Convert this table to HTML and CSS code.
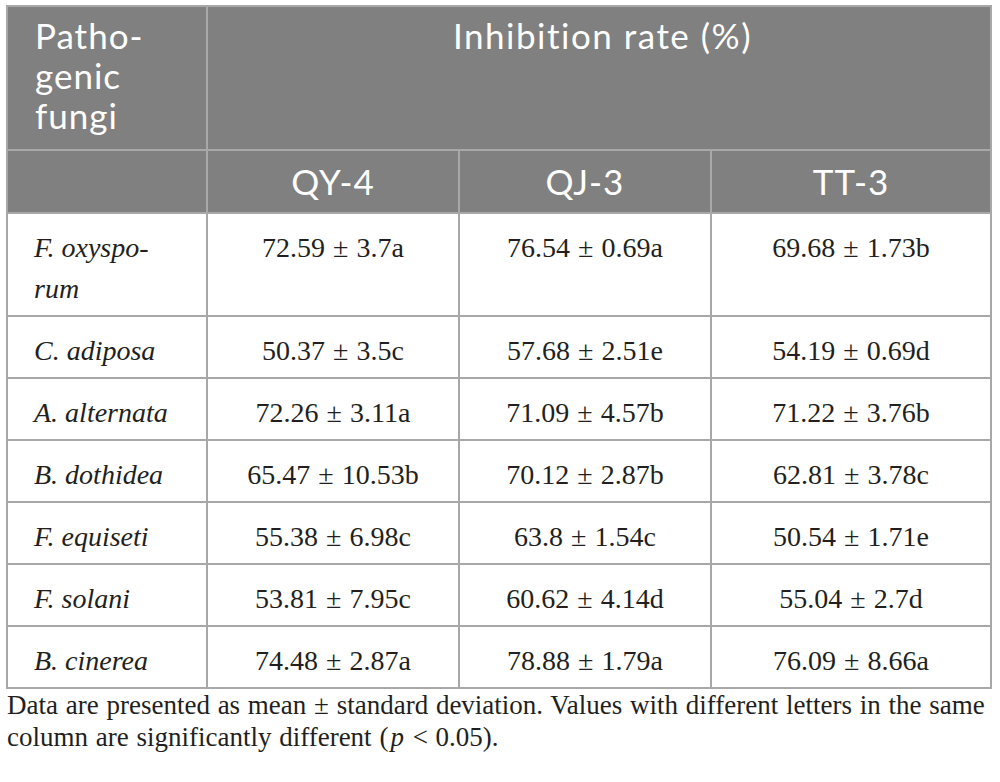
FILE: index.html
```html
<!DOCTYPE html>
<html lang="en">
<head>
<meta charset="utf-8">
<title>Inhibition rate table</title>
<link rel="stylesheet" href="styles.css">
</head>
<body>
<div class="page">
  <div class="tbl">
    <div class="hcell h1 first">Patho-<br>genic<br>fungi</div>
    <div class="hcell h1 span">Inhibition rate (%)</div>
    <div class="hcell h2"></div>
    <div class="hcell h2 c">QY-4</div>
    <div class="hcell h2 c">QJ-3</div>
    <div class="hcell h2 c">TT-3</div>

    <div class="cell name">F. oxyspo-<br>rum</div>
    <div class="cell num">72.59 ± 3.7a</div>
    <div class="cell num">76.54 ± 0.69a</div>
    <div class="cell num">69.68 ± 1.73b</div>

    <div class="cell name">C. adiposa</div>
    <div class="cell num">50.37 ± 3.5c</div>
    <div class="cell num">57.68 ± 2.51e</div>
    <div class="cell num">54.19 ± 0.69d</div>

    <div class="cell name">A. alternata</div>
    <div class="cell num">72.26 ± 3.11a</div>
    <div class="cell num">71.09 ± 4.57b</div>
    <div class="cell num">71.22 ± 3.76b</div>

    <div class="cell name">B. dothidea</div>
    <div class="cell num">65.47 ± 10.53b</div>
    <div class="cell num">70.12 ± 2.87b</div>
    <div class="cell num">62.81 ± 3.78c</div>

    <div class="cell name">F. equiseti</div>
    <div class="cell num">55.38 ± 6.98c</div>
    <div class="cell num">63.8 ± 1.54c</div>
    <div class="cell num">50.54 ± 1.71e</div>

    <div class="cell name">F. solani</div>
    <div class="cell num">53.81 ± 7.95c</div>
    <div class="cell num">60.62 ± 4.14d</div>
    <div class="cell num">55.04 ± 2.7d</div>

    <div class="cell name">B. cinerea</div>
    <div class="cell num">74.48 ± 2.87a</div>
    <div class="cell num">78.88 ± 1.79a</div>
    <div class="cell num">76.09 ± 8.66a</div>
  </div>
  <p class="caption">Data are presented as mean ± standard deviation. Values with different letters in the same column are significantly different (<i>p</i> &lt; 0.05).</p>
</div>
</body>
</html>
```

FILE: styles.css
```css
html, body {
  margin: 0;
  padding: 0;
  background: #ffffff;
}

.page {
  padding: 5px 8px 0 6px;
}

.tbl {
  display: grid;
  grid-template-columns: 198px 250px 250px 278px;
  gap: 2px;
  padding: 2px;
  width: 982px;
  background: #a8a8a8;
}

.hcell {
  background: #808080;
  color: #ffffff;
  font-family: Lato, "Liberation Sans", sans-serif;
  font-size: 35px;
  line-height: 40px;
  letter-spacing: 1px;
}

.h1 {
  padding: 8px 20px 14px 27px;
}

.span {
  grid-column: 2 / 5;
  text-align: center;
  letter-spacing: 1.5px;
}

.h2 {
  padding: 10px 10px 11px;
}

.c {
  text-align: center;
}

.cell {
  background: #ffffff;
  color: #231f20;
  font-family: "Liberation Serif", "Times New Roman", serif;
  font-size: 28px;
  line-height: 41px;
  padding: 13px 10px 6px;
  word-spacing: 1px;
}

.name {
  font-style: italic;
  padding-left: 26px;
  word-spacing: 0;
}

.num {
  text-align: center;
}

.caption {
  margin: 0;
  padding-left: 1px;
  font-family: "Liberation Serif", "Times New Roman", serif;
  font-size: 27px;
  line-height: 32px;
  word-spacing: 1px;
  color: #231f20;
}

.caption i {
  padding: 0 1px 0 2px;
}
```
